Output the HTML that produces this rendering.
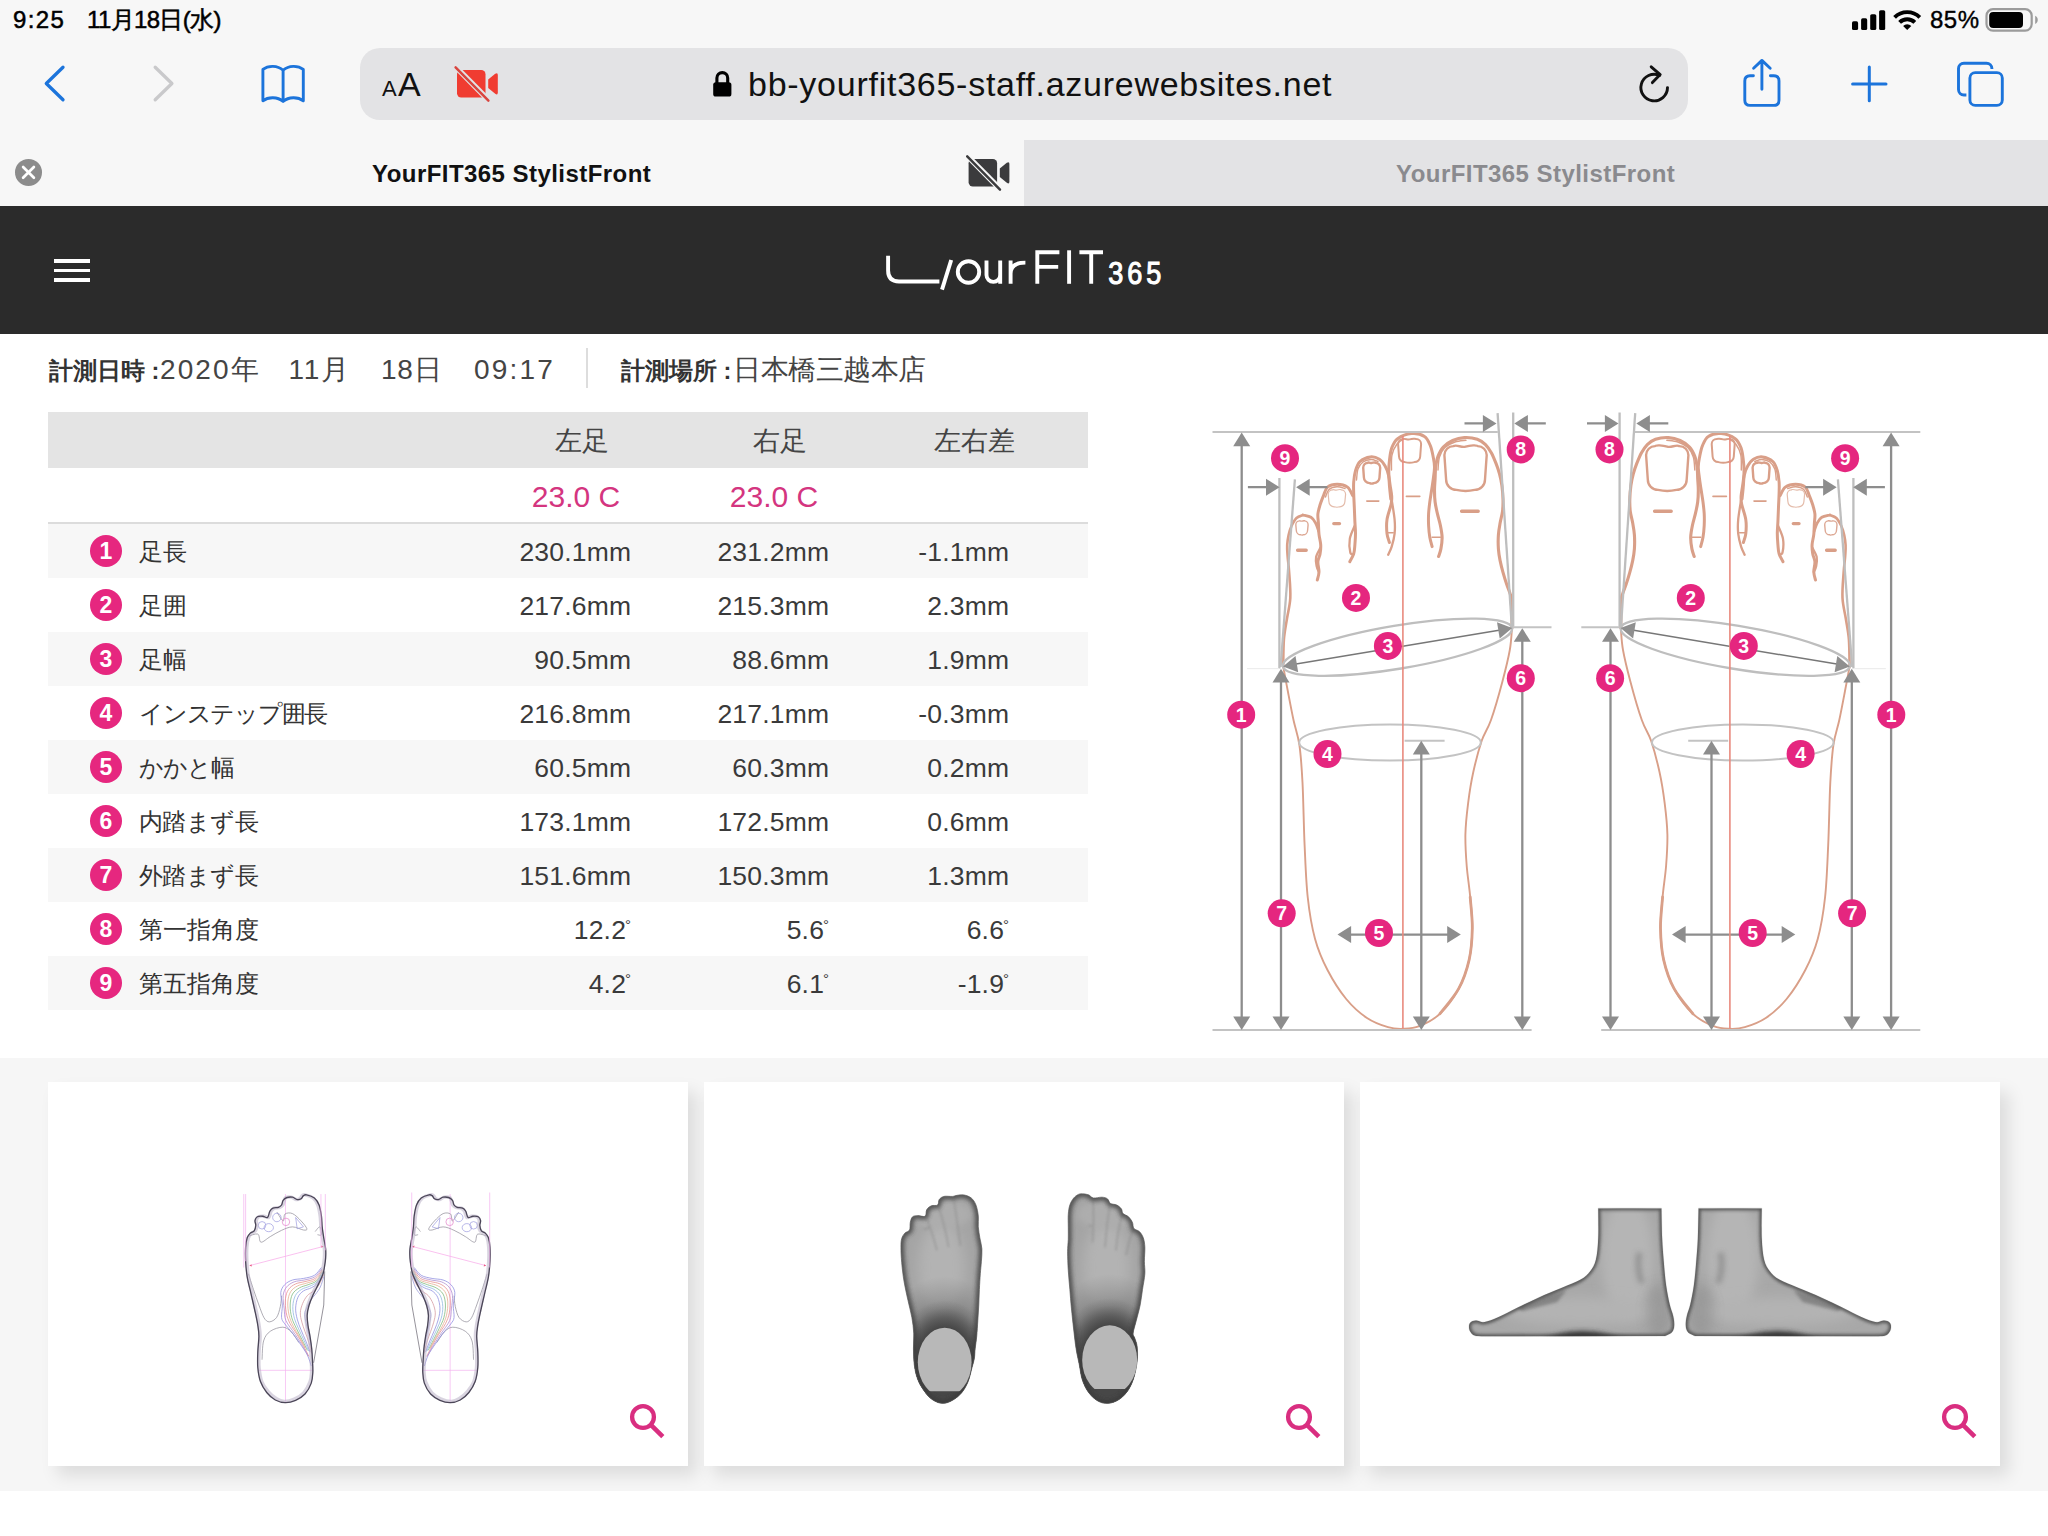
<!DOCTYPE html>
<html lang="ja">
<head>
<meta charset="utf-8">
<title>YourFIT365 StylistFront</title>
<style>
*{margin:0;padding:0;box-sizing:border-box}
html,body{width:2048px;height:1536px;overflow:hidden;background:#fff}
body{font-family:"Liberation Sans",sans-serif;color:#333;position:relative}
.abs{position:absolute}
svg{position:absolute;overflow:visible}
/* ---------- Safari chrome ---------- */
#chrome{position:absolute;left:0;top:0;width:2048px;height:206px;background:#f7f7f7}
#status-time{position:absolute;left:13px;top:6px;font-size:24px;line-height:28px;color:#000;letter-spacing:1.4px;white-space:nowrap;-webkit-text-stroke:.5px #000}
#status-date{position:absolute;left:87px;top:6px;font-size:24px;line-height:28px;color:#000;white-space:nowrap;letter-spacing:-.65px;-webkit-text-stroke:.5px #000}
#status-batt{position:absolute;left:1930px;top:6px;font-size:24px;line-height:28px;color:#000;letter-spacing:.5px;white-space:nowrap;-webkit-text-stroke:.4px #000}
#urlbar{position:absolute;left:360px;top:48px;width:1328px;height:72px;border-radius:20px;background:#e3e3e5}
#aa-s{position:absolute;left:382px;top:74px;font-size:22px;line-height:30px;color:#111}
#aa-b{position:absolute;left:398px;top:62px;font-size:34px;line-height:44px;color:#111}
#url{position:absolute;left:748px;top:62px;font-size:34px;line-height:44px;color:#111;white-space:nowrap;letter-spacing:.74px}
#tab-inactive{position:absolute;left:1024px;top:140px;width:1024px;height:66px;background:#e3e3e5}
.tabtitle{position:absolute;top:159px;font-size:24px;line-height:30px;font-weight:bold;white-space:nowrap;letter-spacing:.45px}
#tab1{left:372px;color:#111}
#tab2{left:1396px;color:#8a8a8e}
/* ---------- App header ---------- */
#appbar{position:absolute;left:0;top:206px;width:2048px;height:128px;background:#2b2b2b}
.hb{position:absolute;left:54px;width:36px;height:3.5px;background:#fff}
/* ---------- Info line ---------- */
.lbl{position:absolute;top:356px;font-size:23.5px;line-height:30px;font-weight:bold;color:#333;white-space:nowrap}
.val{position:absolute;top:352px;font-size:28px;line-height:36px;color:#444;white-space:nowrap}
#vdiv{position:absolute;left:586px;top:348px;width:2px;height:40px;background:#ddd}
/* ---------- Table ---------- */
#thead{position:absolute;left:48px;top:412px;width:1040px;height:56px;background:#e4e4e4}
.th{position:absolute;top:424px;font-size:27px;line-height:34px;color:#444;white-space:nowrap;text-align:center;width:160px}
.size{position:absolute;top:479px;font-size:30px;line-height:36px;color:#d4357f;white-space:nowrap;text-align:center;width:160px}
#tline{position:absolute;left:48px;top:522px;width:1040px;height:2px;background:#dcdcdc}
.row{position:absolute;left:48px;width:1040px;height:54px}
.row.g{background:#f7f7f7}
.num{position:absolute;left:42px;top:11px;width:32px;height:32px;border-radius:50%;background:#e6277f;color:#fff;font-size:23px;line-height:32px;font-weight:bold;text-align:center}
.name{position:absolute;left:91px;top:12px;font-size:23.5px;line-height:32px;color:#333;white-space:nowrap}
.c{position:absolute;top:11px;font-size:26.5px;line-height:34px;color:#3a3a3a;white-space:nowrap;text-align:right;width:200px;letter-spacing:.2px}
.c1{left:383.3px}.c2{left:581.3px}.c3{left:761.3px}
.deg{font-size:15px;position:relative;top:-9px;margin-left:-1px}
/* ---------- Cards ---------- */
#lower{position:absolute;left:0;top:1058px;width:2048px;height:433px;background:#f6f6f6}
.card{position:absolute;top:1082px;width:640px;height:384px;background:#fff;box-shadow:9px 10px 16px rgba(0,0,0,.10)}
</style>
</head>
<body>

<!-- ===== Safari chrome ===== -->
<div id="chrome">
  <div id="status-time">9:25</div>
  <div id="status-date">11月18日(水)</div>
  <div id="status-batt">85%</div>
  <div id="urlbar"></div>
  <div id="aa-s">A</div><div id="aa-b">A</div>
  <div id="url">bb-yourfit365-staff.azurewebsites.net</div>
  <div id="tab-inactive"></div>
  <div class="tabtitle" id="tab1">YourFIT365 StylistFront</div>
  <div class="tabtitle" id="tab2">YourFIT365 StylistFront</div>
  <svg id="chrome-icons" width="2048" height="206" viewBox="0 0 2048 206" style="left:0;top:0" fill="none" stroke-linecap="round" stroke-linejoin="round">
  <!-- status: signal -->
  <g fill="#000" stroke="none">
    <rect x="1852" y="21.3" width="6.1" height="8.7" rx="1.6"/>
    <rect x="1861.1" y="18.3" width="6.1" height="11.7" rx="1.6"/>
    <rect x="1870.2" y="14.2" width="6.1" height="15.8" rx="1.6"/>
    <rect x="1879.1" y="10.2" width="6.1" height="19.8" rx="1.6"/>
    <!-- wifi -->
    <path d="M1907.2 30 L1903.1 25.9 A5.8 5.8 0 0 1 1911.3 25.9 Z"/>
  </g>
  <g stroke="#000" stroke-width="3.9" stroke-linecap="butt">
    <path d="M1894.6 17.4 A17.8 17.8 0 0 1 1919.8 17.4"/>
    <path d="M1899.6 22.4 A10.7 10.7 0 0 1 1914.8 22.4"/>
  </g>
  <!-- battery -->
  <rect x="1986.5" y="9.2" width="45.2" height="21.4" rx="6.5" stroke="#9b9b9b" stroke-width="2.2"/>
  <rect x="1989.2" y="12" width="33.8" height="15.9" rx="4" fill="#000"/>
  <path d="M2035.2 15.7 C2038.6 17 2038.6 22.6 2035.2 23.9 Z" fill="#9b9b9b"/>
  <!-- back / forward -->
  <path d="M63 67.2 L46.3 83.5 L63 99.8" stroke="#1c74db" stroke-width="3.3"/>
  <path d="M155.2 67.2 L171.9 83.5 L155.2 99.8" stroke="#c9c9cb" stroke-width="3.3"/>
  <!-- bookmarks -->
  <path d="M283.1 70.2 C277.6 65.2 268.2 65.2 262.9 69.4 L262.9 100.8 C268.2 96.6 277.6 96.6 283.1 101.4 C288.6 96.6 298 96.6 303.3 100.8 L303.3 69.4 C298 65.2 288.6 65.2 283.1 70.2 Z M283.1 70.2 V101" stroke="#1c74db" stroke-width="2.9"/>
  <!-- red camera slash -->
  <g id="cam">
    <rect x="457" y="70" width="28.5" height="27.4" rx="4.2" fill="#f03c31"/>
    <path d="M488.2 79.6 L495.2 73.8 Q497.8 72 497.8 75 L497.8 92.6 Q497.8 95.6 495.2 93.8 L488.2 88 Z" fill="#f03c31"/>
    <path d="M455.2 66.4 L489.4 101" stroke="#e3e3e5" stroke-width="5.6" stroke-linecap="butt"/>
    <path d="M455.6 67.4 L488.4 100.6" stroke="#d9453f" stroke-width="2.5"/>
  </g>
  <!-- lock -->
  <rect x="713.2" y="82.2" width="18.2" height="14.4" rx="2.6" fill="#000"/>
  <path d="M716.9 84 V78 A5.4 5.4 0 0 1 727.7 78 V84" stroke="#000" stroke-width="3.1"/>
  <!-- reload -->
  <path d="M1667.5 87.6 A13.3 13.3 0 1 1 1659.6 75.4" stroke="#111" stroke-width="2.9"/>
  <path d="M1651.2 66.8 L1660.2 74.6 L1652.4 82.6" stroke="#111" stroke-width="2.9"/>
  <!-- share -->
  <path d="M1753.4 75.8 H1750 Q1744.8 75.8 1744.8 81 V100.2 Q1744.8 105.4 1750 105.4 H1773.8 Q1779 105.4 1779 100.2 V81 Q1779 75.8 1773.8 75.8 H1770.4" stroke="#1c74db" stroke-width="2.9"/>
  <path d="M1761.9 61.2 V89.2 M1753.6 68.2 L1761.9 60.4 L1770.2 68.2" stroke="#1c74db" stroke-width="2.9"/>
  <!-- plus -->
  <path d="M1852.6 83.9 H1886 M1869.3 67 V100.8" stroke="#1c74db" stroke-width="3"/>
  <!-- tabs -->
  <rect x="1958.5" y="63.2" width="33.4" height="31.8" rx="5.4" stroke="#1c74db" stroke-width="2.9"/>
  <rect x="1969.9" y="72.6" width="32.4" height="32.8" rx="5.4" fill="#f7f7f7" stroke="#f7f7f7" stroke-width="7"/>
  <rect x="1969.9" y="72.6" width="32.4" height="32.8" rx="5.4" stroke="#1c74db" stroke-width="2.9"/>
  <!-- tab close -->
  <circle cx="28.5" cy="172.4" r="13.5" fill="#8c8c8c"/>
  <path d="M23.1 167 L33.9 177.8 M33.9 167 L23.1 177.8" stroke="#fff" stroke-width="2.7"/>
  <!-- tab camera (dark) -->
  <g transform="translate(511.6 89)">
    <rect x="457" y="70" width="28.5" height="27.4" rx="4.2" fill="#3b3b3d"/>
    <path d="M488.2 79.6 L495.2 73.8 Q497.8 72 497.8 75 L497.8 92.6 Q497.8 95.6 495.2 93.8 L488.2 88 Z" fill="#3b3b3d"/>
    <path d="M455.2 66.4 L489.4 101" stroke="#f7f7f7" stroke-width="5.6" stroke-linecap="butt"/>
    <path d="M455.6 67.4 L488.4 100.6" stroke="#3b3b3d" stroke-width="2.5"/>
  </g>
</svg>

</div>

<!-- ===== App header ===== -->
<div id="appbar"></div>
<div class="hb" style="top:259px"></div><div class="hb" style="top:268.5px"></div><div class="hb" style="top:278px"></div>
<svg id="logo" width="2048" height="128" viewBox="0 206 2048 128" style="left:0;top:206px" fill="none" stroke="#fff" stroke-width="3.9">
  <path d="M888.1 255.8 V270.6 Q888.1 281.5 899 281.5 H939.4"/>
  <path d="M951.2 260 L942 289.6"/>
  <circle cx="968.5" cy="272" r="10.7"/>
  <path d="M986.5 260.6 V275 A6.85 6.85 0 0 0 1000.2 275 V260.6 M1000.2 275 V283.8"/>
  <path d="M1010.6 260.6 V283.8 M1010.6 273.5 Q1010.6 262.6 1025.4 262.6"/>
  <path d="M1037.3 283.8 V252.2 H1059.4 M1037.3 266.9 H1058.2"/>
  <path d="M1069.1 250.3 V283.8"/>
  <path d="M1079.4 252.2 H1103 M1091.2 252.2 V283.8"/>
  <text x="1108.2" y="283.6" font-family="Liberation Sans, sans-serif" font-size="31.5" fill="#fff" stroke="#fff" stroke-width="1.1" letter-spacing="4.6" transform="translate(1108.2 0) scale(0.86 1) translate(-1108.2 0)">365</text>
</svg>


<!-- ===== Info line ===== -->
<div class="lbl" style="left:49px">計測日時 :</div>
<div class="val" style="left:160px;letter-spacing:2.1px">2020年</div>
<div class="val" style="left:288.5px;letter-spacing:1.7px">11月</div>
<div class="val" style="left:381px;letter-spacing:.7px">18日</div>
<div class="val" style="left:474px;letter-spacing:2.2px">09:17</div>
<div id="vdiv"></div>
<div class="lbl" style="left:621px">計測場所 :</div>
<div class="val" style="left:733px;letter-spacing:-.5px">日本橋三越本店</div>

<!-- ===== Table ===== -->
<div id="thead"></div>
<div class="th" style="left:502px">左足</div>
<div class="th" style="left:700px">右足</div>
<div class="th" style="left:894px">左右差</div>
<div class="size" style="left:496px">23.0 C</div>
<div class="size" style="left:694px">23.0 C</div>
<div id="tline"></div>

<div class="row g" style="top:524px"><div class="num">1</div><div class="name">足長</div><div class="c c1">230.1mm</div><div class="c c2">231.2mm</div><div class="c c3">-1.1mm</div></div>
<div class="row" style="top:578px"><div class="num">2</div><div class="name">足囲</div><div class="c c1">217.6mm</div><div class="c c2">215.3mm</div><div class="c c3">2.3mm</div></div>
<div class="row g" style="top:632px"><div class="num">3</div><div class="name">足幅</div><div class="c c1">90.5mm</div><div class="c c2">88.6mm</div><div class="c c3">1.9mm</div></div>
<div class="row" style="top:686px"><div class="num">4</div><div class="name" style="letter-spacing:-1.25px">インステップ囲長</div><div class="c c1">216.8mm</div><div class="c c2">217.1mm</div><div class="c c3">-0.3mm</div></div>
<div class="row g" style="top:740px"><div class="num">5</div><div class="name" style="letter-spacing:-1px">かかと幅</div><div class="c c1">60.5mm</div><div class="c c2">60.3mm</div><div class="c c3">0.2mm</div></div>
<div class="row" style="top:794px"><div class="num">6</div><div class="name" style="letter-spacing:-.55px">内踏まず長</div><div class="c c1">173.1mm</div><div class="c c2">172.5mm</div><div class="c c3">0.6mm</div></div>
<div class="row g" style="top:848px"><div class="num">7</div><div class="name" style="letter-spacing:-.55px">外踏まず長</div><div class="c c1">151.6mm</div><div class="c c2">150.3mm</div><div class="c c3">1.3mm</div></div>
<div class="row" style="top:902px"><div class="num">8</div><div class="name">第一指角度</div><div class="c c1">12.2<span class="deg">°</span></div><div class="c c2">5.6<span class="deg">°</span></div><div class="c c3">6.6<span class="deg">°</span></div></div>
<div class="row g" style="top:956px"><div class="num">9</div><div class="name">第五指角度</div><div class="c c1">4.2<span class="deg">°</span></div><div class="c c2">6.1<span class="deg">°</span></div><div class="c c3">-1.9<span class="deg">°</span></div></div>

<!-- ===== Foot diagram ===== -->
<!--DIAGRAM-->
<svg id="diagram" width="760" height="660" viewBox="1190 400 760 660" style="left:1190px;top:400px" fill="none">
<defs><g id="footL">
<g stroke="#d99f88" fill="none" stroke-linecap="round" stroke-linejoin="round">
<path d="M1303.0 515.0 C1301.9 515.5 1298.4 516.2 1296.5 518.0 C1294.6 519.8 1292.8 523.2 1291.5 526.0 C1290.2 528.8 1289.3 531.8 1288.6 535.0 C1287.9 538.2 1287.4 541.5 1287.2 545.0 C1287.0 548.5 1287.3 551.3 1287.6 556.0 C1287.9 560.7 1288.8 566.0 1289.2 573.0 C1289.7 580.0 1290.7 590.4 1290.3 598.0 C1289.9 605.6 1288.1 611.6 1287.0 618.5 C1285.9 625.4 1284.5 631.5 1283.9 639.5 C1283.3 647.5 1283.3 662.0 1283.2 666.5" stroke-width="2.6"/>
<path d="M1283.2 666.5 C1284.0 670.7 1286.2 682.6 1287.9 691.5 C1289.6 700.4 1291.6 711.1 1293.5 720.0 C1295.4 728.9 1297.9 734.6 1299.4 745.0 C1300.9 755.4 1301.6 765.8 1302.5 782.5 C1303.4 799.2 1303.7 825.9 1304.6 845.0 C1305.5 864.1 1306.0 881.4 1307.7 897.0 C1309.4 912.6 1311.7 926.5 1315.0 938.7 C1318.3 950.9 1322.3 960.0 1327.5 970.0 C1332.7 980.0 1339.6 991.0 1346.2 999.0 C1352.8 1007.0 1360.0 1013.3 1367.0 1018.0 C1374.0 1022.7 1382.0 1025.4 1388.0 1027.2 C1394.0 1029.0 1397.8 1029.0 1403.0 1028.8 C1408.2 1028.6 1413.0 1028.7 1419.2 1026.2 C1425.4 1023.7 1433.4 1020.0 1440.0 1013.7 C1446.6 1007.5 1453.8 997.7 1458.7 988.7 C1463.6 979.7 1466.9 969.7 1469.2 959.6 C1471.5 949.5 1472.1 938.7 1472.3 928.3 C1472.5 917.9 1471.1 907.4 1470.2 897.0 C1469.3 886.6 1467.5 876.2 1466.7 865.8 C1465.9 855.4 1465.2 845.0 1465.4 834.6 C1465.6 824.2 1466.8 813.7 1468.1 803.3 C1469.4 792.9 1471.0 782.4 1473.3 772.0 C1475.6 761.6 1478.8 749.5 1481.7 740.8 C1484.7 732.1 1487.5 729.9 1491.0 720.0 C1494.5 710.1 1499.4 692.9 1502.5 681.2 C1505.6 669.5 1508.2 658.9 1509.8 650.0 C1511.4 641.1 1511.6 631.7 1512.0 628.0" stroke-width="1.9"/>
<path d="M1512.0 628.0 C1511.9 623.3 1511.9 605.8 1511.6 600.0 C1511.3 594.2 1510.8 596.1 1510.0 593.4 C1509.2 590.7 1507.8 587.5 1506.6 584.0 C1505.4 580.5 1504.1 576.2 1503.0 572.3 C1501.9 568.4 1500.9 564.5 1500.1 560.6 C1499.3 556.7 1498.7 553.2 1498.4 548.9 C1498.1 544.6 1498.1 539.1 1498.4 534.8 C1498.7 530.5 1499.4 527.0 1500.1 523.1 C1500.8 519.2 1502.0 515.3 1502.5 511.4 C1503.0 507.5 1503.1 504.0 1503.0 499.7 C1502.9 495.4 1502.5 489.9 1501.9 485.6 C1501.3 481.3 1500.5 477.6 1499.5 473.9 C1498.5 470.2 1497.4 466.9 1496.0 463.4 C1494.6 459.9 1493.0 455.9 1491.3 452.8 C1489.5 449.7 1487.8 446.9 1485.5 444.6 C1483.2 442.4 1480.8 440.5 1477.3 439.3 C1473.8 438.1 1468.5 437.4 1464.4 437.6 C1460.3 437.8 1456.2 438.9 1452.7 440.5 C1449.2 442.1 1445.8 444.4 1443.3 447.0 C1440.8 449.6 1439.3 453.0 1438.0 456.3 C1436.7 459.6 1436.2 463.2 1435.7 466.9 C1435.2 470.6 1435.3 474.7 1435.1 478.6 C1434.9 482.5 1434.5 486.4 1434.5 490.3 C1434.5 494.2 1434.6 498.1 1435.1 502.0 C1435.6 505.9 1436.5 509.8 1437.4 513.7 C1438.3 517.6 1439.6 521.6 1440.4 525.5 C1441.2 529.4 1442.0 533.3 1442.1 537.2 C1442.2 541.1 1441.5 545.7 1440.9 548.9 C1440.3 552.1 1439.0 555.2 1438.6 556.5" stroke-width="3.1"/>
<path d="M1440.0 1013.7 C1443.1 1009.5 1453.8 997.7 1458.7 988.7 C1463.6 979.7 1466.9 969.7 1469.2 959.6 C1471.5 949.5 1472.1 938.7 1472.3 928.3 C1472.5 917.9 1470.5 902.2 1470.2 897.0" stroke-width="2.8"/>
<path d="M1432.1 546.6 C1431.7 545.0 1430.4 540.7 1429.8 537.2 C1429.2 533.7 1428.8 529.4 1428.6 525.5 C1428.4 521.6 1428.4 517.6 1428.6 513.7 C1428.8 509.8 1429.3 505.9 1429.8 502.0 C1430.3 498.1 1431.0 494.2 1431.6 490.3 C1432.2 486.4 1432.8 482.5 1433.3 478.6 C1433.8 474.7 1434.5 470.4 1434.5 466.9 C1434.5 463.4 1434.0 461.0 1433.3 457.5 C1432.6 454.0 1431.9 449.3 1430.4 445.8 C1428.9 442.3 1427.6 438.4 1424.5 436.4 C1421.4 434.3 1416.1 433.1 1411.6 433.5 C1407.1 433.9 1400.9 436.3 1397.6 438.7 C1394.3 441.1 1393.1 444.4 1391.7 448.1 C1390.3 451.8 1389.9 456.9 1389.4 461.0 C1388.9 465.1 1388.7 468.8 1388.8 472.7 C1388.9 476.6 1389.5 480.6 1390.0 484.5 C1390.5 488.4 1391.5 492.9 1391.7 496.2 C1391.9 499.5 1391.9 500.5 1391.1 504.4 C1390.3 508.3 1387.7 514.7 1387.0 519.6 C1386.3 524.5 1386.6 529.9 1387.0 533.7 C1387.4 537.5 1389.0 541.0 1389.4 542.5" stroke-width="3.0"/>
<path d="M1391.7 500.0 C1392.2 503.3 1394.1 514.0 1394.6 519.6 C1395.1 525.2 1395.1 529.2 1394.6 533.7 C1394.1 538.2 1392.8 543.1 1391.7 546.6 C1390.6 550.1 1388.8 553.4 1388.2 554.8" stroke-width="2.3"/>
<path d="M1432.1 537.2 H1440.4 M1387.5 532.8 H1393.2" stroke-width="1.5"/>
<path d="M1390.8 499.1 C1390.6 497.2 1390.0 491.7 1389.6 487.7 C1389.2 483.7 1389.2 478.7 1388.5 475.1 C1387.8 471.5 1386.6 468.6 1385.1 466.0 C1383.6 463.4 1381.9 460.7 1379.4 459.2 C1376.9 457.7 1373.5 456.5 1370.3 456.9 C1367.1 457.3 1362.5 459.2 1360.0 461.5 C1357.5 463.8 1356.5 467.2 1355.5 470.6 C1354.5 474.0 1354.0 478.2 1353.7 482.0 C1353.4 485.8 1353.6 489.2 1353.7 493.4 C1353.8 497.6 1354.1 502.2 1354.3 507.0 C1354.5 511.8 1354.7 517.5 1354.9 521.9 C1355.1 526.3 1355.5 529.4 1355.5 533.2 C1355.5 537.0 1355.2 541.2 1354.9 544.6 C1354.6 548.0 1354.6 550.9 1353.7 553.7 C1352.8 556.6 1350.5 560.4 1349.8 561.7" stroke-width="3.0"/>
<path d="M1354.6 526.0 C1353.8 528.1 1350.5 534.5 1349.8 538.9 C1349.1 543.3 1349.7 550.0 1350.3 552.6 C1350.9 555.2 1352.8 554.2 1353.3 554.5" stroke-width="2.3"/>
<path d="M1352.6 495.6 C1351.8 494.2 1350.1 489.0 1347.5 487.1 C1344.9 485.2 1340.5 484.2 1337.2 484.2 C1333.9 484.2 1329.8 485.2 1327.5 487.1 C1325.2 489.0 1324.7 492.7 1323.5 495.6 C1322.3 498.6 1321.0 501.8 1320.1 504.8 C1319.2 507.9 1318.2 510.9 1317.9 513.9 C1317.6 516.9 1318.2 519.6 1318.4 523.0 C1318.6 526.4 1318.6 530.8 1319.0 534.4 C1319.4 538.0 1320.5 541.4 1320.7 544.6 C1320.9 547.8 1320.6 550.9 1320.1 553.7 C1319.6 556.6 1318.1 558.7 1317.9 561.7 C1317.7 564.8 1319.1 569.0 1319.0 572.0 C1318.9 575.0 1317.6 578.7 1317.3 580.0" stroke-width="3.0"/>
<path d="M1320.3 548.0 C1319.6 549.5 1316.7 554.0 1316.1 557.0 C1315.5 560.0 1316.1 563.5 1316.6 566.0 C1317.1 568.5 1318.5 571.0 1318.9 572.0" stroke-width="2.3"/>
<path d="M1303.0 515.0 C1304.3 515.4 1308.9 516.0 1311.0 517.3 C1313.1 518.6 1314.3 520.7 1315.6 523.0 C1316.9 525.3 1318.1 529.7 1318.6 531.0" stroke-width="2.8"/>
<path d="M1438.0 470.0 C1438.2 467.8 1438.3 460.8 1439.5 457.0 C1440.7 453.2 1442.4 450.0 1445.0 447.5 C1447.6 445.0 1451.5 443.2 1455.0 442.0 C1458.5 440.8 1464.2 440.6 1466.0 440.3" stroke-width="1.4"/>
<path d="M1391.5 470.0 C1391.6 467.5 1391.1 459.3 1392.0 455.0 C1392.9 450.7 1395.0 446.7 1397.0 444.0 C1399.0 441.3 1402.8 439.8 1404.0 439.0" stroke-width="1.4"/>
<path d="M1356.5 480.0 C1356.8 478.2 1356.9 472.0 1358.0 469.0 C1359.1 466.0 1360.8 463.6 1363.0 462.0 C1365.2 460.4 1368.5 459.6 1371.0 459.5 C1373.5 459.4 1376.8 461.2 1378.0 461.5" stroke-width="1.4"/>
<path d="M1325.5 497.0 C1326.1 495.8 1327.1 491.2 1329.0 489.5 C1330.9 487.8 1334.3 487.0 1337.0 486.8 C1339.7 486.6 1343.7 488.2 1345.0 488.5" stroke-width="1.4"/>
<path d="M1444.4 455.1 A9.0 9.0 0 0 1 1453.4 446.1 C1457.1 444.3 1461.3 447.9 1465.6 446.6 S1477.4 444.8 1477.7 446.1 A9.0 9.0 0 0 1 1486.7 455.1 L1485.0 479.5 A10.3 10.3 0 0 1 1474.7 489.9 Q1465.6 492.1 1456.4 489.9 A10.3 10.3 0 0 1 1446.1 479.5 Z" stroke-width="2.4" opacity="1.00"/>
<path d="M1398.1 444.1 A5.0 5.0 0 0 1 1403.1 439.1 C1405.0 438.2 1407.3 440.0 1409.6 439.4 S1416.0 438.4 1416.1 439.1 A5.0 5.0 0 0 1 1421.1 444.1 L1420.2 456.4 A5.8 5.8 0 0 1 1414.4 462.1 Q1409.6 463.2 1404.8 462.1 A5.8 5.8 0 0 1 1399.0 456.4 Z" stroke-width="2.0" opacity="1.00"/>
<path d="M1363.2 467.7 A5.0 5.0 0 0 1 1368.2 462.7 C1368.3 461.9 1370.0 463.5 1371.7 462.9 S1376.5 462.1 1375.2 462.7 A5.0 5.0 0 0 1 1380.2 467.7 L1379.5 477.4 A5.8 5.8 0 0 1 1373.8 483.1 Q1371.7 484.1 1369.6 483.1 A5.8 5.8 0 0 1 1363.9 477.4 Z" stroke-width="2.4" opacity="1.00"/>
<path d="M1328.2 494.3 A4.5 4.5 0 0 1 1332.7 489.8 C1333.4 489.1 1335.2 490.5 1336.9 490.0 S1341.8 489.3 1341.1 489.8 A4.5 4.5 0 0 1 1345.6 494.3 L1344.9 501.6 A5.2 5.2 0 0 1 1339.7 506.8 Q1336.9 507.7 1334.1 506.8 A5.2 5.2 0 0 1 1328.9 501.6 Z" stroke-width="1.2" opacity="0.70"/>
<path d="M1295.8 524.9 A4.0 4.0 0 0 1 1299.8 520.9 C1299.5 520.3 1300.7 521.5 1301.9 521.1 S1305.4 520.5 1304.1 520.9 A4.0 4.0 0 0 1 1308.1 524.9 L1307.6 530.2 A4.6 4.6 0 0 1 1303.0 534.8 Q1301.9 535.5 1300.9 534.8 A4.6 4.6 0 0 1 1296.3 530.2 Z" stroke-width="1.4" opacity="0.90"/>
<path d="M1461.6 511.2 H1478.2 M1333.8 523.6 H1339.5 M1297.6 550.3 H1306.2" stroke-width="3.4" stroke-linecap="round"/>
<path d="M1406.4 496.4 H1419.8 M1366.8 501.1 H1378.8" stroke-width="1.6"/>
</g>
<g stroke="#c3c3c3" stroke-width="2" fill="none">
<path d="M1212.5 432 H1497.8"/>
<path d="M1212.5 1030 H1531.6"/>
<path d="M1512 627.2 H1551.5"/>
<path d="M1404.6 740.8 H1444.6"/>
<ellipse cx="1390" cy="742.5" rx="90.8" ry="18"/>
</g>
<g stroke="#bebebe" stroke-width="2.3" fill="none">
<path d="M1279.4 478 V668.5"/>
<path d="M1294.9 479.4 L1280.6 667"/>
<path d="M1513.2 412.5 V626.5"/>
<path d="M1497.6 413.2 L1511.8 626.5"/>
<ellipse cx="1397.5" cy="647.2" rx="116.2" ry="21.6" transform="rotate(-9.47 1397.5 647.2)"/>
</g>
<path d="M1247 668.6 H1279" stroke="#ededed" stroke-width="1.2"/>
<g stroke="#8d8d8d" stroke-width="2.3" fill="none">
<path d="M1241.7 440 V1020"/>
<path d="M1281 678 V1020"/>
<path d="M1522.3 638 V1020"/>
<path d="M1421.3 750 V1020"/>
<path d="M1347 934.6 H1451"/>
<path d="M1247.9 487.2 H1270 M1305 487.2 H1327.5"/>
<path d="M1464.5 423.4 H1486 M1524 423.4 H1545.8"/>
</g>
<path d="M1290 665.1 L1505 629.3" stroke="#777" stroke-width="1.5"/>
<path d="M1241.7 432.6 L1250.2 446.2 L1233.2 446.2 Z" fill="#8d8d8d" stroke="none"/>
<path d="M1241.7 1030.0 L1233.2 1016.4 L1250.2 1016.4 Z" fill="#8d8d8d" stroke="none"/>
<path d="M1281.0 668.8 L1289.5 682.4 L1272.5 682.4 Z" fill="#8d8d8d" stroke="none"/>
<path d="M1281.0 1030.0 L1272.5 1016.4 L1289.5 1016.4 Z" fill="#8d8d8d" stroke="none"/>
<path d="M1522.3 628.2 L1530.8 641.8 L1513.8 641.8 Z" fill="#8d8d8d" stroke="none"/>
<path d="M1522.3 1030.0 L1513.8 1016.4 L1530.8 1016.4 Z" fill="#8d8d8d" stroke="none"/>
<path d="M1421.3 740.8 L1429.8 754.4 L1412.8 754.4 Z" fill="#8d8d8d" stroke="none"/>
<path d="M1421.3 1030.0 L1412.8 1016.4 L1429.8 1016.4 Z" fill="#8d8d8d" stroke="none"/>
<path d="M1337.5 934.6 L1351.1 926.1 L1351.1 943.1 Z" fill="#8d8d8d" stroke="none"/>
<path d="M1460.8 934.6 L1447.2 943.1 L1447.2 926.1 Z" fill="#8d8d8d" stroke="none"/>
<path d="M1279.6 487.2 L1266.0 495.7 L1266.0 478.7 Z" fill="#8d8d8d" stroke="none"/>
<path d="M1296.1 487.2 L1309.7 478.7 L1309.7 495.7 Z" fill="#8d8d8d" stroke="none"/>
<path d="M1496.5 423.4 L1482.9 431.9 L1482.9 414.9 Z" fill="#8d8d8d" stroke="none"/>
<path d="M1514.3 423.4 L1527.9 414.9 L1527.9 431.9 Z" fill="#8d8d8d" stroke="none"/>
<path d="M1512.2 628.0 L1499.7 638.4 L1497.0 622.2 Z" fill="#8f8f8f" stroke="none"/>
<path d="M1283.0 666.4 L1295.5 656.0 L1298.2 672.2 Z" fill="#8f8f8f" stroke="none"/>
<path d="M1402.9 436 V1028.5" stroke="#e98a7e" stroke-width="1.6" fill="none"/>
</g></defs>
<use href="#footL"/>
<use href="#footL" transform="translate(3132.8 0) scale(-1 1)"/>
<g font-family="Liberation Sans, sans-serif" font-size="19.5" font-weight="bold" fill="#fff" text-anchor="middle">
<circle cx="1285.0" cy="458.2" r="14" fill="#e5267f"/><text x="1285.0" y="465.1">9</text>
<circle cx="1520.7" cy="449.4" r="14" fill="#e5267f"/><text x="1520.7" y="456.3">8</text>
<circle cx="1356.0" cy="597.9" r="14" fill="#e5267f"/><text x="1356.0" y="604.8">2</text>
<circle cx="1387.9" cy="645.9" r="14" fill="#e5267f"/><text x="1387.9" y="652.8">3</text>
<circle cx="1520.8" cy="678.2" r="14" fill="#e5267f"/><text x="1520.8" y="685.1">6</text>
<circle cx="1241.2" cy="714.7" r="14" fill="#e5267f"/><text x="1241.2" y="721.6">1</text>
<circle cx="1327.5" cy="754.0" r="14" fill="#e5267f"/><text x="1327.5" y="760.9">4</text>
<circle cx="1281.7" cy="913.3" r="14" fill="#e5267f"/><text x="1281.7" y="920.2">7</text>
<circle cx="1379.0" cy="933.0" r="14" fill="#e5267f"/><text x="1379.0" y="939.9">5</text>
<circle cx="1609.5" cy="449.4" r="14" fill="#e5267f"/><text x="1609.5" y="456.3">8</text>
<circle cx="1845.1" cy="458.2" r="14" fill="#e5267f"/><text x="1845.1" y="465.1">9</text>
<circle cx="1690.8" cy="597.9" r="14" fill="#e5267f"/><text x="1690.8" y="604.8">2</text>
<circle cx="1743.8" cy="645.9" r="14" fill="#e5267f"/><text x="1743.8" y="652.8">3</text>
<circle cx="1610.1" cy="678.2" r="14" fill="#e5267f"/><text x="1610.1" y="685.1">6</text>
<circle cx="1891.3" cy="714.7" r="14" fill="#e5267f"/><text x="1891.3" y="721.6">1</text>
<circle cx="1800.6" cy="754.0" r="14" fill="#e5267f"/><text x="1800.6" y="760.9">4</text>
<circle cx="1852.1" cy="913.3" r="14" fill="#e5267f"/><text x="1852.1" y="920.2">7</text>
<circle cx="1752.7" cy="933.0" r="14" fill="#e5267f"/><text x="1752.7" y="939.9">5</text>
</g></svg>
<!--/DIAGRAM-->

<!-- ===== Lower cards ===== -->
<div id="lower"></div>
<div class="card" style="left:48px"></div>
<div class="card" style="left:704px"></div>
<div class="card" style="left:1360px"></div>
<!--CARDS-->
<svg id="cards" width="2048" height="420" viewBox="0 1070 2048 420" style="left:0;top:1070px" fill="none">
<defs>
<filter id="b6" filterUnits="userSpaceOnUse" x="-300" y="-300" width="2800" height="2200"><feGaussianBlur stdDeviation="6"/></filter>
<filter id="b12" filterUnits="userSpaceOnUse" x="-300" y="-300" width="2800" height="2200"><feGaussianBlur stdDeviation="12"/></filter>
<filter id="b22" filterUnits="userSpaceOnUse" x="-300" y="-300" width="2800" height="2200"><feGaussianBlur stdDeviation="22"/></filter>
<linearGradient id="ankg" x1="0" y1="0" x2="0" y2="1"><stop offset="0" stop-color="#4a4a4a" stop-opacity="0"/><stop offset=".1" stop-color="#4a4a4a" stop-opacity="0"/><stop offset=".25" stop-color="#4a4a4a" stop-opacity=".5"/><stop offset=".37" stop-color="#484848" stop-opacity=".95"/><stop offset="1" stop-color="#464646"/></linearGradient>
<radialGradient id="ankr2"><stop offset="0" stop-color="#505050" stop-opacity=".7"/><stop offset=".45" stop-color="#505050" stop-opacity=".6"/><stop offset=".75" stop-color="#585858" stop-opacity=".25"/><stop offset="1" stop-color="#606060" stop-opacity="0"/></radialGradient>
<radialGradient id="ankr"><stop offset="0" stop-color="#474747"/><stop offset=".56" stop-color="#474747"/><stop offset=".72" stop-color="#4c4c4c" stop-opacity=".6"/><stop offset=".88" stop-color="#555" stop-opacity=".18"/><stop offset="1" stop-color="#555" stop-opacity="0"/></radialGradient>
<filter id="b40" filterUnits="userSpaceOnUse" x="-300" y="-300" width="2800" height="2200"><feGaussianBlur stdDeviation="40"/></filter>
</defs>
<g id="printL" transform="translate(230 1180) scale(0.15625)">
<g stroke="#f4b4ef" stroke-width="4.6">
<path d="M355 90 V1425 M180 1218 H528"/>
<path d="M125 548 L598 425" stroke="#f8b0ea" stroke-width="5"/>
</g>
<path d="M598 425 l-15 -6 l3 15z M125 548 l15 6 l-3 -15z" fill="#ea5a82"/>
<path d="M606 585 L600 800 L535 1170" stroke="#77737d" stroke-width="5"/>
<g stroke="#8d8a96" stroke-width="4.5">
<path d="M112.0 362.0 C123.0 359.3 163.7 340.0 178.0 346.0 C192.3 352.0 184.7 395.3 198.0 398.0 C211.3 400.7 236.0 374.7 258.0 362.0 C280.0 349.3 306.3 332.3 330.0 322.0 C353.7 311.7 376.7 300.3 400.0 300.0 C423.3 299.7 454.7 318.0 470.0 320.0 C485.3 322.0 494.5 321.7 492.0 312.0 C489.5 302.3 470.3 278.2 455.0 262.0 C439.7 245.8 417.2 222.3 400.0 215.0 C382.8 207.7 362.0 210.2 352.0 218.0 C342.0 225.8 348.7 264.2 340.0 262.0 C331.3 259.8 306.7 214.5 300.0 205.0"/>
<path d="M118.0 600.0 C123.3 616.7 138.8 666.7 150.0 700.0 C161.2 733.3 173.7 769.7 185.0 800.0 C196.3 830.3 206.8 864.0 218.0 882.0 C229.2 900.0 238.7 908.3 252.0 908.0 C265.3 907.7 286.3 896.3 298.0 880.0 C309.7 863.7 316.7 833.3 322.0 810.0 C327.3 786.7 328.7 751.7 330.0 740.0"/>
<path d="M205.0 1150.0 C206.7 1130.0 206.2 1060.3 215.0 1030.0 C223.8 999.7 237.5 982.7 258.0 968.0 C278.5 953.3 315.7 941.3 338.0 942.0 C360.3 942.7 375.0 955.7 392.0 972.0 C409.0 988.3 432.0 1028.7 440.0 1040.0"/>
<path d="M545.0 330.0 C550.0 325.0 568.3 296.7 575.0 300.0 C581.7 303.3 587.5 341.7 585.0 350.0 C582.5 358.3 564.2 350.0 560.0 350.0"/>
</g>
<g stroke="#9c9be0" stroke-width="4.5"><circle cx="205" cy="290" r="24"/><circle cx="300" cy="240" r="27"/><ellipse cx="248" cy="305" rx="30" ry="26"/><path d="M420 240 L470 300 L430 312 Z"/></g>
<circle cx="358" cy="268" r="24" stroke="#e58fd0" stroke-width="5"/>
<path d="M585.0 560.0 C577.5 568.3 559.2 598.3 540.0 610.0 C520.8 621.7 493.3 625.0 470.0 630.0 C446.7 635.0 420.0 633.3 400.0 640.0 C380.0 646.7 362.5 656.7 350.0 670.0 C337.5 683.3 327.5 698.3 325.0 720.0 C322.5 741.7 334.2 773.3 335.0 800.0 C335.8 826.7 327.5 860.0 330.0 880.0 C332.5 900.0 338.3 903.3 350.0 920.0 C361.7 936.7 383.3 958.3 400.0 980.0 C416.7 1001.7 434.2 1026.7 450.0 1050.0 C465.8 1073.3 483.3 1096.7 495.0 1120.0 C506.7 1143.3 515.8 1178.3 520.0 1190.0" stroke="#8f8fe0" stroke-width="5"/>
<path d="M590.0 575.0 C582.5 584.2 563.3 617.5 545.0 630.0 C526.7 642.5 500.8 644.2 480.0 650.0 C459.2 655.8 437.5 656.7 420.0 665.0 C402.5 673.3 385.8 684.2 375.0 700.0 C364.2 715.8 357.5 735.0 355.0 760.0 C352.5 785.0 355.0 823.3 360.0 850.0 C365.0 876.7 373.3 896.7 385.0 920.0 C396.7 943.3 415.8 966.7 430.0 990.0 C444.2 1013.3 457.5 1036.7 470.0 1060.0 C482.5 1083.3 499.2 1118.3 505.0 1130.0" stroke="#e58f8f" stroke-width="5"/>
<path d="M595.0 585.0 C588.3 595.0 570.8 630.8 555.0 645.0 C539.2 659.2 518.3 662.5 500.0 670.0 C481.7 677.5 461.7 680.0 445.0 690.0 C428.3 700.0 410.0 711.7 400.0 730.0 C390.0 748.3 385.8 775.0 385.0 800.0 C384.2 825.0 388.3 855.0 395.0 880.0 C401.7 905.0 414.2 926.7 425.0 950.0 C435.8 973.3 448.3 996.7 460.0 1020.0 C471.7 1043.3 489.2 1078.3 495.0 1090.0" stroke="#7db87d" stroke-width="5"/>
<path d="M598.0 595.0 C591.7 605.8 573.0 644.2 560.0 660.0 C547.0 675.8 535.0 681.7 520.0 690.0 C505.0 698.3 484.2 700.0 470.0 710.0 C455.8 720.0 443.3 731.7 435.0 750.0 C426.7 768.3 420.8 796.7 420.0 820.0 C419.2 843.3 424.2 866.7 430.0 890.0 C435.8 913.3 445.8 936.7 455.0 960.0 C464.2 983.3 475.5 1006.7 485.0 1030.0 C494.5 1053.3 507.5 1088.3 512.0 1100.0" stroke="#8f8fe0" stroke-width="5"/>
<path d="M600.0 605.0 C595.0 615.8 580.8 652.5 570.0 670.0 C559.2 687.5 547.5 698.3 535.0 710.0 C522.5 721.7 506.7 726.7 495.0 740.0 C483.3 753.3 472.5 771.7 465.0 790.0 C457.5 808.3 450.8 830.0 450.0 850.0 C449.2 870.0 455.0 890.0 460.0 910.0 C465.0 930.0 472.5 948.3 480.0 970.0 C487.5 991.7 498.0 1016.7 505.0 1040.0 C512.0 1063.3 519.2 1098.3 522.0 1110.0" stroke="#d59aa0" stroke-width="5"/>
<path d="M602.0 615.0 C598.0 626.7 587.0 665.8 578.0 685.0 C569.0 704.2 558.5 715.8 548.0 730.0 C537.5 744.2 524.7 755.0 515.0 770.0 C505.3 785.0 496.2 805.0 490.0 820.0 C483.8 835.0 478.3 843.3 478.0 860.0 C477.7 876.7 483.5 898.3 488.0 920.0 C492.5 941.7 499.7 966.7 505.0 990.0 C510.3 1013.3 517.5 1048.3 520.0 1060.0" stroke="#9a9ad8" stroke-width="5"/>
<path d="M587.0 568.0 C579.5 576.7 560.7 608.0 542.0 620.0 C523.3 632.0 497.0 634.7 475.0 640.0 C453.0 645.3 428.8 644.5 410.0 652.0 C391.2 659.5 373.7 670.3 362.0 685.0 C350.3 699.7 342.5 716.7 340.0 740.0 C337.5 763.3 344.0 798.3 347.0 825.0 C350.0 851.7 346.7 873.3 358.0 900.0 C369.3 926.7 398.0 959.2 415.0 985.0 C432.0 1010.8 445.8 1031.7 460.0 1055.0 C474.2 1078.3 493.3 1113.3 500.0 1125.0" stroke="#b08fd0" stroke-width="5"/>
<path d="M593.0 580.0 C585.8 589.7 567.2 624.7 550.0 638.0 C532.8 651.3 509.7 653.3 490.0 660.0 C470.3 666.7 449.0 668.8 432.0 678.0 C415.0 687.2 398.3 698.0 388.0 715.0 C377.7 732.0 371.7 755.0 370.0 780.0 C368.3 805.0 372.2 839.2 378.0 865.0 C383.8 890.8 393.8 911.7 405.0 935.0 C416.2 958.3 432.0 981.7 445.0 1005.0 C458.0 1028.3 476.7 1063.3 483.0 1075.0" stroke="#e5b08f" stroke-width="5"/>
<path d="M597.0 590.0 C590.5 600.3 572.5 637.0 558.0 652.0 C543.5 667.0 526.7 672.0 510.0 680.0 C493.3 688.0 473.3 690.0 458.0 700.0 C442.7 710.0 427.3 721.7 418.0 740.0 C408.7 758.3 403.0 785.8 402.0 810.0 C401.0 834.2 405.7 860.8 412.0 885.0 C418.3 909.2 429.8 931.7 440.0 955.0 C450.2 978.3 462.3 1001.7 473.0 1025.0 C483.7 1048.3 498.8 1083.3 504.0 1095.0" stroke="#8fb8e0" stroke-width="5"/>
<path d="M482.0 95.0 C493.7 97.5 518.7 104.2 532.0 115.0 C545.3 125.8 554.5 140.8 562.0 160.0 C569.5 179.2 573.7 206.7 577.0 230.0 C580.3 253.3 579.5 276.7 582.0 300.0 C584.5 323.3 588.3 346.7 592.0 370.0 C595.7 393.3 602.0 418.3 604.0 440.0 C606.0 461.7 605.3 480.0 604.0 500.0 C602.7 520.0 599.0 542.5 596.0 560.0 C593.0 577.5 592.2 587.5 586.0 605.0 C579.8 622.5 569.3 643.3 559.0 665.0 C548.7 686.7 534.3 711.7 524.0 735.0 C513.7 758.3 503.3 783.3 497.0 805.0 C490.7 826.7 487.0 844.2 486.0 865.0 C485.0 885.8 488.0 907.5 491.0 930.0 C494.0 952.5 500.0 975.0 504.0 1000.0 C508.0 1025.0 512.3 1053.3 515.0 1080.0 C517.7 1106.7 518.8 1135.0 520.0 1160.0 C521.2 1185.0 523.3 1208.0 522.0 1230.0 C520.7 1252.0 520.3 1270.0 512.0 1292.0 C503.7 1314.0 488.7 1343.7 472.0 1362.0 C455.3 1380.3 432.8 1392.8 412.0 1402.0 C391.2 1411.2 366.0 1417.3 347.0 1417.0 C328.0 1416.7 315.3 1410.8 298.0 1400.0 C280.7 1389.2 258.8 1370.3 243.0 1352.0 C227.2 1333.7 212.5 1315.3 203.0 1290.0 C193.5 1264.7 188.8 1231.7 186.0 1200.0 C183.2 1168.3 184.8 1133.3 186.0 1100.0 C187.2 1066.7 193.0 1028.3 193.0 1000.0 C193.0 971.7 190.2 956.7 186.0 930.0 C181.8 903.3 175.2 873.3 168.0 840.0 C160.8 806.7 151.3 766.7 143.0 730.0 C134.7 693.3 123.8 655.0 118.0 620.0 C112.2 585.0 109.7 551.7 108.0 520.0 C106.3 488.3 106.3 455.0 108.0 430.0 C109.7 405.0 113.0 385.0 118.0 370.0 C123.0 355.0 130.5 347.5 138.0 340.0 C145.5 332.5 157.2 333.3 163.0 325.0 C168.8 316.7 172.2 300.8 173.0 290.0 C173.8 279.2 166.3 269.2 168.0 260.0 C169.7 250.8 174.7 239.7 183.0 235.0 C191.3 230.3 207.2 231.2 218.0 232.0 C228.8 232.8 240.5 245.3 248.0 240.0 C255.5 234.7 257.2 210.0 263.0 200.0 C268.8 190.0 273.8 184.2 283.0 180.0 C292.2 175.8 308.8 178.3 318.0 175.0 C327.2 171.7 333.0 167.5 338.0 160.0 C343.0 152.5 344.8 138.0 348.0 130.0 C351.2 122.0 349.7 115.3 357.0 112.0 C364.3 108.7 381.2 107.8 392.0 110.0 C402.8 112.2 412.8 123.3 422.0 125.0 C431.2 126.7 440.3 124.2 447.0 120.0 C453.7 115.8 456.2 104.2 462.0 100.0 C467.8 95.8 470.3 92.5 482.0 95.0Z" stroke="#b9b0c6" stroke-width="22" opacity=".55"/>
<path d="M490.0 95.0 C501.7 97.5 526.7 104.2 540.0 115.0 C553.3 125.8 562.5 140.8 570.0 160.0 C577.5 179.2 581.7 206.7 585.0 230.0 C588.3 253.3 587.5 276.7 590.0 300.0 C592.5 323.3 596.3 346.7 600.0 370.0 C603.7 393.3 610.0 418.3 612.0 440.0 C614.0 461.7 613.3 480.0 612.0 500.0 C610.7 520.0 607.0 542.5 604.0 560.0 C601.0 577.5 600.2 587.5 594.0 605.0 C587.8 622.5 577.3 643.3 567.0 665.0 C556.7 686.7 542.3 711.7 532.0 735.0 C521.7 758.3 511.3 783.3 505.0 805.0 C498.7 826.7 495.0 844.2 494.0 865.0 C493.0 885.8 496.0 907.5 499.0 930.0 C502.0 952.5 508.0 975.0 512.0 1000.0 C516.0 1025.0 520.3 1053.3 523.0 1080.0 C525.7 1106.7 526.8 1135.0 528.0 1160.0 C529.2 1185.0 531.3 1206.7 530.0 1230.0 C528.7 1253.3 528.3 1276.7 520.0 1300.0 C511.7 1323.3 496.7 1351.7 480.0 1370.0 C463.3 1388.3 440.8 1400.8 420.0 1410.0 C399.2 1419.2 376.7 1425.3 355.0 1425.0 C333.3 1424.7 310.0 1418.8 290.0 1408.0 C270.0 1397.2 250.8 1379.7 235.0 1360.0 C219.2 1340.3 204.5 1316.7 195.0 1290.0 C185.5 1263.3 180.8 1231.7 178.0 1200.0 C175.2 1168.3 176.8 1133.3 178.0 1100.0 C179.2 1066.7 185.0 1028.3 185.0 1000.0 C185.0 971.7 182.2 956.7 178.0 930.0 C173.8 903.3 167.2 873.3 160.0 840.0 C152.8 806.7 143.3 766.7 135.0 730.0 C126.7 693.3 115.8 655.0 110.0 620.0 C104.2 585.0 101.7 551.7 100.0 520.0 C98.3 488.3 98.3 455.0 100.0 430.0 C101.7 405.0 105.0 385.0 110.0 370.0 C115.0 355.0 122.5 347.5 130.0 340.0 C137.5 332.5 149.2 333.3 155.0 325.0 C160.8 316.7 164.2 300.8 165.0 290.0 C165.8 279.2 158.3 269.2 160.0 260.0 C161.7 250.8 166.7 239.7 175.0 235.0 C183.3 230.3 199.2 231.2 210.0 232.0 C220.8 232.8 232.5 245.3 240.0 240.0 C247.5 234.7 249.2 210.0 255.0 200.0 C260.8 190.0 265.8 184.2 275.0 180.0 C284.2 175.8 300.8 178.3 310.0 175.0 C319.2 171.7 325.0 167.5 330.0 160.0 C335.0 152.5 334.2 138.0 340.0 130.0 C345.8 122.0 355.0 115.3 365.0 112.0 C375.0 108.7 389.2 107.8 400.0 110.0 C410.8 112.2 420.8 123.3 430.0 125.0 C439.2 126.7 448.3 124.2 455.0 120.0 C461.7 115.8 464.2 104.2 470.0 100.0 C475.8 95.8 478.3 92.5 490.0 95.0Z" stroke="#4b4658" stroke-width="8.5" stroke-linejoin="round"/>
</g>
<use href="#printL" transform="translate(735.6 0) scale(-1 1)"/>
<g transform="translate(230 1180) scale(0.15625)" stroke="#f4b4ef" stroke-width="4.6"><path d="M88 90 V560 M100 90 V520 M582 90 V430 M610 90 V450"/></g>
<g transform="translate(230 1180) scale(0.15625)" stroke="#f4b4ef" stroke-width="4.6"><path d="M1163 80 V560 M1662 80 V560"/></g>
<g transform="translate(890 1180) scale(0.15625)">
<clipPath id="flc"><path d="M470.0 95.0 C485.0 97.8 506.7 104.2 520.0 115.0 C533.3 125.8 542.5 140.8 550.0 160.0 C557.5 179.2 562.5 206.7 565.0 230.0 C567.5 253.3 563.3 276.7 565.0 300.0 C566.7 323.3 571.2 346.7 575.0 370.0 C578.8 393.3 586.3 415.0 588.0 440.0 C589.7 465.0 586.7 493.3 585.0 520.0 C583.3 546.7 580.2 570.0 578.0 600.0 C575.8 630.0 573.7 666.7 572.0 700.0 C570.3 733.3 569.7 766.7 568.0 800.0 C566.3 833.3 564.2 866.7 562.0 900.0 C559.8 933.3 557.8 970.0 555.0 1000.0 C552.2 1030.0 547.5 1056.7 545.0 1080.0 C542.5 1103.3 543.3 1120.0 540.0 1140.0 C536.7 1160.0 531.7 1175.0 525.0 1200.0 C518.3 1225.0 510.8 1263.3 500.0 1290.0 C489.2 1316.7 476.7 1340.0 460.0 1360.0 C443.3 1380.0 420.8 1398.3 400.0 1410.0 C379.2 1421.7 356.7 1430.8 335.0 1430.0 C313.3 1429.2 290.0 1419.2 270.0 1405.0 C250.0 1390.8 230.8 1367.5 215.0 1345.0 C199.2 1322.5 185.0 1297.5 175.0 1270.0 C165.0 1242.5 159.2 1211.7 155.0 1180.0 C150.8 1148.3 150.5 1113.3 150.0 1080.0 C149.5 1046.7 153.7 1013.3 152.0 980.0 C150.3 946.7 146.2 915.0 140.0 880.0 C133.8 845.0 123.3 808.3 115.0 770.0 C106.7 731.7 96.7 690.0 90.0 650.0 C83.3 610.0 78.3 566.7 75.0 530.0 C71.7 493.3 70.0 455.8 70.0 430.0 C70.0 404.2 70.8 390.0 75.0 375.0 C79.2 360.0 86.7 349.2 95.0 340.0 C103.3 330.8 119.2 331.7 125.0 320.0 C130.8 308.3 126.7 284.2 130.0 270.0 C133.3 255.8 136.7 242.0 145.0 235.0 C153.3 228.0 166.7 228.5 180.0 228.0 C193.3 227.5 215.8 238.3 225.0 232.0 C234.2 225.7 228.3 201.2 235.0 190.0 C241.7 178.8 253.3 170.0 265.0 165.0 C276.7 160.0 296.7 166.7 305.0 160.0 C313.3 153.3 308.3 134.2 315.0 125.0 C321.7 115.8 330.8 108.3 345.0 105.0 C359.2 101.7 385.8 106.2 400.0 105.0 C414.2 103.8 418.3 99.7 430.0 98.0 C441.7 96.3 455.0 92.2 470.0 95.0Z"/></clipPath>
<clipPath id="fld"><rect x="0" y="0" width="800" height="1352"/></clipPath>
<g clip-path="url(#flc)">
<path d="M470.0 95.0 C485.0 97.8 506.7 104.2 520.0 115.0 C533.3 125.8 542.5 140.8 550.0 160.0 C557.5 179.2 562.5 206.7 565.0 230.0 C567.5 253.3 563.3 276.7 565.0 300.0 C566.7 323.3 571.2 346.7 575.0 370.0 C578.8 393.3 586.3 415.0 588.0 440.0 C589.7 465.0 586.7 493.3 585.0 520.0 C583.3 546.7 580.2 570.0 578.0 600.0 C575.8 630.0 573.7 666.7 572.0 700.0 C570.3 733.3 569.7 766.7 568.0 800.0 C566.3 833.3 564.2 866.7 562.0 900.0 C559.8 933.3 557.8 970.0 555.0 1000.0 C552.2 1030.0 547.5 1056.7 545.0 1080.0 C542.5 1103.3 543.3 1120.0 540.0 1140.0 C536.7 1160.0 531.7 1175.0 525.0 1200.0 C518.3 1225.0 510.8 1263.3 500.0 1290.0 C489.2 1316.7 476.7 1340.0 460.0 1360.0 C443.3 1380.0 420.8 1398.3 400.0 1410.0 C379.2 1421.7 356.7 1430.8 335.0 1430.0 C313.3 1429.2 290.0 1419.2 270.0 1405.0 C250.0 1390.8 230.8 1367.5 215.0 1345.0 C199.2 1322.5 185.0 1297.5 175.0 1270.0 C165.0 1242.5 159.2 1211.7 155.0 1180.0 C150.8 1148.3 150.5 1113.3 150.0 1080.0 C149.5 1046.7 153.7 1013.3 152.0 980.0 C150.3 946.7 146.2 915.0 140.0 880.0 C133.8 845.0 123.3 808.3 115.0 770.0 C106.7 731.7 96.7 690.0 90.0 650.0 C83.3 610.0 78.3 566.7 75.0 530.0 C71.7 493.3 70.0 455.8 70.0 430.0 C70.0 404.2 70.8 390.0 75.0 375.0 C79.2 360.0 86.7 349.2 95.0 340.0 C103.3 330.8 119.2 331.7 125.0 320.0 C130.8 308.3 126.7 284.2 130.0 270.0 C133.3 255.8 136.7 242.0 145.0 235.0 C153.3 228.0 166.7 228.5 180.0 228.0 C193.3 227.5 215.8 238.3 225.0 232.0 C234.2 225.7 228.3 201.2 235.0 190.0 C241.7 178.8 253.3 170.0 265.0 165.0 C276.7 160.0 296.7 166.7 305.0 160.0 C313.3 153.3 308.3 134.2 315.0 125.0 C321.7 115.8 330.8 108.3 345.0 105.0 C359.2 101.7 385.8 106.2 400.0 105.0 C414.2 103.8 418.3 99.7 430.0 98.0 C441.7 96.3 455.0 92.2 470.0 95.0Z" fill="#a4a4a4"/>
<ellipse cx="330" cy="560" rx="150" ry="300" fill="#b3b3b3" filter="url(#b40)"/>
<ellipse cx="330" cy="220" rx="190" ry="90" fill="#adadad" filter="url(#b22)"/>
<ellipse cx="350" cy="1167" rx="432" ry="552" fill="url(#ankr2)"/>
<ellipse cx="350" cy="1167" rx="322" ry="397" fill="url(#ankr)"/>
<rect x="0" y="1207" width="800" height="500" fill="#474747" filter="url(#b22)"/>
<path d="M232 240 Q270 330 300 450 M312 175 Q350 290 375 430 M408 120 Q430 260 450 420 M215 310 Q240 320 250 300" stroke="#8a8a8a" stroke-width="10" filter="url(#b6)" opacity=".55"/>
<path d="M470.0 95.0 C485.0 97.8 506.7 104.2 520.0 115.0 C533.3 125.8 542.5 140.8 550.0 160.0 C557.5 179.2 562.5 206.7 565.0 230.0 C567.5 253.3 563.3 276.7 565.0 300.0 C566.7 323.3 571.2 346.7 575.0 370.0 C578.8 393.3 586.3 415.0 588.0 440.0 C589.7 465.0 586.7 493.3 585.0 520.0 C583.3 546.7 580.2 570.0 578.0 600.0 C575.8 630.0 573.7 666.7 572.0 700.0 C570.3 733.3 569.7 766.7 568.0 800.0 C566.3 833.3 564.2 866.7 562.0 900.0 C559.8 933.3 557.8 970.0 555.0 1000.0 C552.2 1030.0 547.5 1056.7 545.0 1080.0 C542.5 1103.3 543.3 1120.0 540.0 1140.0 C536.7 1160.0 531.7 1175.0 525.0 1200.0 C518.3 1225.0 510.8 1263.3 500.0 1290.0 C489.2 1316.7 476.7 1340.0 460.0 1360.0 C443.3 1380.0 420.8 1398.3 400.0 1410.0 C379.2 1421.7 356.7 1430.8 335.0 1430.0 C313.3 1429.2 290.0 1419.2 270.0 1405.0 C250.0 1390.8 230.8 1367.5 215.0 1345.0 C199.2 1322.5 185.0 1297.5 175.0 1270.0 C165.0 1242.5 159.2 1211.7 155.0 1180.0 C150.8 1148.3 150.5 1113.3 150.0 1080.0 C149.5 1046.7 153.7 1013.3 152.0 980.0 C150.3 946.7 146.2 915.0 140.0 880.0 C133.8 845.0 123.3 808.3 115.0 770.0 C106.7 731.7 96.7 690.0 90.0 650.0 C83.3 610.0 78.3 566.7 75.0 530.0 C71.7 493.3 70.0 455.8 70.0 430.0 C70.0 404.2 70.8 390.0 75.0 375.0 C79.2 360.0 86.7 349.2 95.0 340.0 C103.3 330.8 119.2 331.7 125.0 320.0 C130.8 308.3 126.7 284.2 130.0 270.0 C133.3 255.8 136.7 242.0 145.0 235.0 C153.3 228.0 166.7 228.5 180.0 228.0 C193.3 227.5 215.8 238.3 225.0 232.0 C234.2 225.7 228.3 201.2 235.0 190.0 C241.7 178.8 253.3 170.0 265.0 165.0 C276.7 160.0 296.7 166.7 305.0 160.0 C313.3 153.3 308.3 134.2 315.0 125.0 C321.7 115.8 330.8 108.3 345.0 105.0 C359.2 101.7 385.8 106.2 400.0 105.0 C414.2 103.8 418.3 99.7 430.0 98.0 C441.7 96.3 455.0 92.2 470.0 95.0Z" stroke="#3a3a3a" stroke-width="40" filter="url(#b12)" opacity=".8"/>
</g>
<path d="M470.0 95.0 C485.0 97.8 506.7 104.2 520.0 115.0 C533.3 125.8 542.5 140.8 550.0 160.0 C557.5 179.2 562.5 206.7 565.0 230.0 C567.5 253.3 563.3 276.7 565.0 300.0 C566.7 323.3 571.2 346.7 575.0 370.0 C578.8 393.3 586.3 415.0 588.0 440.0 C589.7 465.0 586.7 493.3 585.0 520.0 C583.3 546.7 580.2 570.0 578.0 600.0 C575.8 630.0 573.7 666.7 572.0 700.0 C570.3 733.3 569.7 766.7 568.0 800.0 C566.3 833.3 564.2 866.7 562.0 900.0 C559.8 933.3 557.8 970.0 555.0 1000.0 C552.2 1030.0 547.5 1056.7 545.0 1080.0 C542.5 1103.3 543.3 1120.0 540.0 1140.0 C536.7 1160.0 531.7 1175.0 525.0 1200.0 C518.3 1225.0 510.8 1263.3 500.0 1290.0 C489.2 1316.7 476.7 1340.0 460.0 1360.0 C443.3 1380.0 420.8 1398.3 400.0 1410.0 C379.2 1421.7 356.7 1430.8 335.0 1430.0 C313.3 1429.2 290.0 1419.2 270.0 1405.0 C250.0 1390.8 230.8 1367.5 215.0 1345.0 C199.2 1322.5 185.0 1297.5 175.0 1270.0 C165.0 1242.5 159.2 1211.7 155.0 1180.0 C150.8 1148.3 150.5 1113.3 150.0 1080.0 C149.5 1046.7 153.7 1013.3 152.0 980.0 C150.3 946.7 146.2 915.0 140.0 880.0 C133.8 845.0 123.3 808.3 115.0 770.0 C106.7 731.7 96.7 690.0 90.0 650.0 C83.3 610.0 78.3 566.7 75.0 530.0 C71.7 493.3 70.0 455.8 70.0 430.0 C70.0 404.2 70.8 390.0 75.0 375.0 C79.2 360.0 86.7 349.2 95.0 340.0 C103.3 330.8 119.2 331.7 125.0 320.0 C130.8 308.3 126.7 284.2 130.0 270.0 C133.3 255.8 136.7 242.0 145.0 235.0 C153.3 228.0 166.7 228.5 180.0 228.0 C193.3 227.5 215.8 238.3 225.0 232.0 C234.2 225.7 228.3 201.2 235.0 190.0 C241.7 178.8 253.3 170.0 265.0 165.0 C276.7 160.0 296.7 166.7 305.0 160.0 C313.3 153.3 308.3 134.2 315.0 125.0 C321.7 115.8 330.8 108.3 345.0 105.0 C359.2 101.7 385.8 106.2 400.0 105.0 C414.2 103.8 418.3 99.7 430.0 98.0 C441.7 96.3 455.0 92.2 470.0 95.0Z" stroke="#5a5a5a" stroke-width="6" opacity=".75"/>
<g clip-path="url(#fld)"><ellipse cx="350" cy="1167" rx="172" ry="222" fill="#b8b8b8"/></g>
</g>
<g transform="translate(1055 1180) scale(0.15625)">
<clipPath id="frc"><path d="M175.0 88.0 C185.8 88.5 203.3 90.5 215.0 95.0 C226.7 99.5 230.8 112.5 245.0 115.0 C259.2 117.5 285.0 109.2 300.0 110.0 C315.0 110.8 325.8 113.3 335.0 120.0 C344.2 126.7 345.0 143.3 355.0 150.0 C365.0 156.7 383.3 154.2 395.0 160.0 C406.7 165.8 418.3 175.8 425.0 185.0 C431.7 194.2 427.5 206.7 435.0 215.0 C442.5 223.3 460.0 225.8 470.0 235.0 C480.0 244.2 489.2 257.5 495.0 270.0 C500.8 282.5 497.5 300.0 505.0 310.0 C512.5 320.0 530.0 320.0 540.0 330.0 C550.0 340.0 559.2 353.3 565.0 370.0 C570.8 386.7 573.8 405.0 575.0 430.0 C576.2 455.0 572.0 491.7 572.0 520.0 C572.0 548.3 577.0 570.0 575.0 600.0 C573.0 630.0 565.0 666.7 560.0 700.0 C555.0 733.3 551.7 766.7 545.0 800.0 C538.3 833.3 527.5 870.0 520.0 900.0 C512.5 930.0 501.7 961.7 500.0 980.0 C498.3 998.3 505.8 996.7 510.0 1010.0 C514.2 1023.3 522.0 1040.0 525.0 1060.0 C528.0 1080.0 528.8 1106.7 528.0 1130.0 C527.2 1153.3 524.7 1175.0 520.0 1200.0 C515.3 1225.0 509.2 1255.0 500.0 1280.0 C490.8 1305.0 480.0 1329.2 465.0 1350.0 C450.0 1370.8 430.8 1391.7 410.0 1405.0 C389.2 1418.3 362.5 1428.3 340.0 1430.0 C317.5 1431.7 295.8 1426.7 275.0 1415.0 C254.2 1403.3 231.7 1382.5 215.0 1360.0 C198.3 1337.5 185.0 1310.0 175.0 1280.0 C165.0 1250.0 161.7 1213.3 155.0 1180.0 C148.3 1146.7 140.8 1116.7 135.0 1080.0 C129.2 1043.3 125.0 1003.3 120.0 960.0 C115.0 916.7 109.2 863.3 105.0 820.0 C100.8 776.7 98.3 740.0 95.0 700.0 C91.7 660.0 87.5 620.0 85.0 580.0 C82.5 540.0 80.0 493.3 80.0 460.0 C80.0 426.7 84.2 406.7 85.0 380.0 C85.8 353.3 85.0 326.7 85.0 300.0 C85.0 273.3 83.3 243.3 85.0 220.0 C86.7 196.7 89.2 177.5 95.0 160.0 C100.8 142.5 110.8 126.3 120.0 115.0 C129.2 103.7 140.8 96.5 150.0 92.0 C159.2 87.5 164.2 87.5 175.0 88.0Z"/></clipPath>
<clipPath id="frd"><rect x="0" y="0" width="800" height="1337"/></clipPath>
<g clip-path="url(#frc)">
<path d="M175.0 88.0 C185.8 88.5 203.3 90.5 215.0 95.0 C226.7 99.5 230.8 112.5 245.0 115.0 C259.2 117.5 285.0 109.2 300.0 110.0 C315.0 110.8 325.8 113.3 335.0 120.0 C344.2 126.7 345.0 143.3 355.0 150.0 C365.0 156.7 383.3 154.2 395.0 160.0 C406.7 165.8 418.3 175.8 425.0 185.0 C431.7 194.2 427.5 206.7 435.0 215.0 C442.5 223.3 460.0 225.8 470.0 235.0 C480.0 244.2 489.2 257.5 495.0 270.0 C500.8 282.5 497.5 300.0 505.0 310.0 C512.5 320.0 530.0 320.0 540.0 330.0 C550.0 340.0 559.2 353.3 565.0 370.0 C570.8 386.7 573.8 405.0 575.0 430.0 C576.2 455.0 572.0 491.7 572.0 520.0 C572.0 548.3 577.0 570.0 575.0 600.0 C573.0 630.0 565.0 666.7 560.0 700.0 C555.0 733.3 551.7 766.7 545.0 800.0 C538.3 833.3 527.5 870.0 520.0 900.0 C512.5 930.0 501.7 961.7 500.0 980.0 C498.3 998.3 505.8 996.7 510.0 1010.0 C514.2 1023.3 522.0 1040.0 525.0 1060.0 C528.0 1080.0 528.8 1106.7 528.0 1130.0 C527.2 1153.3 524.7 1175.0 520.0 1200.0 C515.3 1225.0 509.2 1255.0 500.0 1280.0 C490.8 1305.0 480.0 1329.2 465.0 1350.0 C450.0 1370.8 430.8 1391.7 410.0 1405.0 C389.2 1418.3 362.5 1428.3 340.0 1430.0 C317.5 1431.7 295.8 1426.7 275.0 1415.0 C254.2 1403.3 231.7 1382.5 215.0 1360.0 C198.3 1337.5 185.0 1310.0 175.0 1280.0 C165.0 1250.0 161.7 1213.3 155.0 1180.0 C148.3 1146.7 140.8 1116.7 135.0 1080.0 C129.2 1043.3 125.0 1003.3 120.0 960.0 C115.0 916.7 109.2 863.3 105.0 820.0 C100.8 776.7 98.3 740.0 95.0 700.0 C91.7 660.0 87.5 620.0 85.0 580.0 C82.5 540.0 80.0 493.3 80.0 460.0 C80.0 426.7 84.2 406.7 85.0 380.0 C85.8 353.3 85.0 326.7 85.0 300.0 C85.0 273.3 83.3 243.3 85.0 220.0 C86.7 196.7 89.2 177.5 95.0 160.0 C100.8 142.5 110.8 126.3 120.0 115.0 C129.2 103.7 140.8 96.5 150.0 92.0 C159.2 87.5 164.2 87.5 175.0 88.0Z" fill="#a4a4a4"/>
<ellipse cx="330" cy="560" rx="150" ry="300" fill="#b3b3b3" filter="url(#b40)"/>
<ellipse cx="330" cy="220" rx="190" ry="90" fill="#adadad" filter="url(#b22)"/>
<ellipse cx="350" cy="1152" rx="436" ry="552" fill="url(#ankr2)"/>
<ellipse cx="350" cy="1152" rx="326" ry="397" fill="url(#ankr)"/>
<rect x="0" y="1192" width="800" height="500" fill="#474747" filter="url(#b22)"/>
<path d="M245 130 Q250 260 240 400 M350 165 Q330 290 320 430 M430 220 Q400 330 390 450 M500 310 Q470 400 455 480 M215 290 Q225 300 235 290" stroke="#8a8a8a" stroke-width="10" filter="url(#b6)" opacity=".55"/>
<path d="M175.0 88.0 C185.8 88.5 203.3 90.5 215.0 95.0 C226.7 99.5 230.8 112.5 245.0 115.0 C259.2 117.5 285.0 109.2 300.0 110.0 C315.0 110.8 325.8 113.3 335.0 120.0 C344.2 126.7 345.0 143.3 355.0 150.0 C365.0 156.7 383.3 154.2 395.0 160.0 C406.7 165.8 418.3 175.8 425.0 185.0 C431.7 194.2 427.5 206.7 435.0 215.0 C442.5 223.3 460.0 225.8 470.0 235.0 C480.0 244.2 489.2 257.5 495.0 270.0 C500.8 282.5 497.5 300.0 505.0 310.0 C512.5 320.0 530.0 320.0 540.0 330.0 C550.0 340.0 559.2 353.3 565.0 370.0 C570.8 386.7 573.8 405.0 575.0 430.0 C576.2 455.0 572.0 491.7 572.0 520.0 C572.0 548.3 577.0 570.0 575.0 600.0 C573.0 630.0 565.0 666.7 560.0 700.0 C555.0 733.3 551.7 766.7 545.0 800.0 C538.3 833.3 527.5 870.0 520.0 900.0 C512.5 930.0 501.7 961.7 500.0 980.0 C498.3 998.3 505.8 996.7 510.0 1010.0 C514.2 1023.3 522.0 1040.0 525.0 1060.0 C528.0 1080.0 528.8 1106.7 528.0 1130.0 C527.2 1153.3 524.7 1175.0 520.0 1200.0 C515.3 1225.0 509.2 1255.0 500.0 1280.0 C490.8 1305.0 480.0 1329.2 465.0 1350.0 C450.0 1370.8 430.8 1391.7 410.0 1405.0 C389.2 1418.3 362.5 1428.3 340.0 1430.0 C317.5 1431.7 295.8 1426.7 275.0 1415.0 C254.2 1403.3 231.7 1382.5 215.0 1360.0 C198.3 1337.5 185.0 1310.0 175.0 1280.0 C165.0 1250.0 161.7 1213.3 155.0 1180.0 C148.3 1146.7 140.8 1116.7 135.0 1080.0 C129.2 1043.3 125.0 1003.3 120.0 960.0 C115.0 916.7 109.2 863.3 105.0 820.0 C100.8 776.7 98.3 740.0 95.0 700.0 C91.7 660.0 87.5 620.0 85.0 580.0 C82.5 540.0 80.0 493.3 80.0 460.0 C80.0 426.7 84.2 406.7 85.0 380.0 C85.8 353.3 85.0 326.7 85.0 300.0 C85.0 273.3 83.3 243.3 85.0 220.0 C86.7 196.7 89.2 177.5 95.0 160.0 C100.8 142.5 110.8 126.3 120.0 115.0 C129.2 103.7 140.8 96.5 150.0 92.0 C159.2 87.5 164.2 87.5 175.0 88.0Z" stroke="#3a3a3a" stroke-width="40" filter="url(#b12)" opacity=".8"/>
</g>
<path d="M175.0 88.0 C185.8 88.5 203.3 90.5 215.0 95.0 C226.7 99.5 230.8 112.5 245.0 115.0 C259.2 117.5 285.0 109.2 300.0 110.0 C315.0 110.8 325.8 113.3 335.0 120.0 C344.2 126.7 345.0 143.3 355.0 150.0 C365.0 156.7 383.3 154.2 395.0 160.0 C406.7 165.8 418.3 175.8 425.0 185.0 C431.7 194.2 427.5 206.7 435.0 215.0 C442.5 223.3 460.0 225.8 470.0 235.0 C480.0 244.2 489.2 257.5 495.0 270.0 C500.8 282.5 497.5 300.0 505.0 310.0 C512.5 320.0 530.0 320.0 540.0 330.0 C550.0 340.0 559.2 353.3 565.0 370.0 C570.8 386.7 573.8 405.0 575.0 430.0 C576.2 455.0 572.0 491.7 572.0 520.0 C572.0 548.3 577.0 570.0 575.0 600.0 C573.0 630.0 565.0 666.7 560.0 700.0 C555.0 733.3 551.7 766.7 545.0 800.0 C538.3 833.3 527.5 870.0 520.0 900.0 C512.5 930.0 501.7 961.7 500.0 980.0 C498.3 998.3 505.8 996.7 510.0 1010.0 C514.2 1023.3 522.0 1040.0 525.0 1060.0 C528.0 1080.0 528.8 1106.7 528.0 1130.0 C527.2 1153.3 524.7 1175.0 520.0 1200.0 C515.3 1225.0 509.2 1255.0 500.0 1280.0 C490.8 1305.0 480.0 1329.2 465.0 1350.0 C450.0 1370.8 430.8 1391.7 410.0 1405.0 C389.2 1418.3 362.5 1428.3 340.0 1430.0 C317.5 1431.7 295.8 1426.7 275.0 1415.0 C254.2 1403.3 231.7 1382.5 215.0 1360.0 C198.3 1337.5 185.0 1310.0 175.0 1280.0 C165.0 1250.0 161.7 1213.3 155.0 1180.0 C148.3 1146.7 140.8 1116.7 135.0 1080.0 C129.2 1043.3 125.0 1003.3 120.0 960.0 C115.0 916.7 109.2 863.3 105.0 820.0 C100.8 776.7 98.3 740.0 95.0 700.0 C91.7 660.0 87.5 620.0 85.0 580.0 C82.5 540.0 80.0 493.3 80.0 460.0 C80.0 426.7 84.2 406.7 85.0 380.0 C85.8 353.3 85.0 326.7 85.0 300.0 C85.0 273.3 83.3 243.3 85.0 220.0 C86.7 196.7 89.2 177.5 95.0 160.0 C100.8 142.5 110.8 126.3 120.0 115.0 C129.2 103.7 140.8 96.5 150.0 92.0 C159.2 87.5 164.2 87.5 175.0 88.0Z" stroke="#5a5a5a" stroke-width="6" opacity=".75"/>
<g clip-path="url(#frd)"><ellipse cx="350" cy="1152" rx="176" ry="222" fill="#b8b8b8"/></g>
</g>
<g transform="translate(1440 1180) scale(0.234375)">
<clipPath id="sdc"><path d="M675 120 H945  C945.5 141.7 946.3 211.7 948.0 250.0 C949.7 288.3 952.2 316.7 955.0 350.0 C957.8 383.3 960.8 420.0 965.0 450.0 C969.2 480.0 975.0 508.3 980.0 530.0 C985.0 551.7 991.7 565.0 995.0 580.0 C998.3 595.0 1000.8 608.3 1000.0 620.0 C999.2 631.7 996.7 642.3 990.0 650.0 C983.3 657.7 965.0 663.3 960.0 666.0 L200 668  C191.7 667.5 162.0 668.8 150.0 665.0 C138.0 661.2 132.3 652.5 128.0 645.0 C123.7 637.5 122.8 626.8 124.0 620.0 C125.2 613.2 129.0 607.3 135.0 604.0 C141.0 600.7 150.8 599.7 160.0 600.0 C169.2 600.3 175.0 608.5 190.0 606.0 C205.0 603.5 226.7 595.2 250.0 585.0 C273.3 574.8 301.7 558.8 330.0 545.0 C358.3 531.2 388.3 516.2 420.0 502.0 C451.7 487.8 490.0 472.8 520.0 460.0 C550.0 447.2 580.0 436.7 600.0 425.0 C620.0 413.3 629.2 404.2 640.0 390.0 C650.8 375.8 659.2 363.3 665.0 340.0 C670.8 316.7 673.3 286.7 675.0 250.0 C676.7 213.3 675.0 141.7 675.0 120.0Z"/></clipPath>
<g id="sideL"><g clip-path="url(#sdc)">
<path d="M675 120 H945  C945.5 141.7 946.3 211.7 948.0 250.0 C949.7 288.3 952.2 316.7 955.0 350.0 C957.8 383.3 960.8 420.0 965.0 450.0 C969.2 480.0 975.0 508.3 980.0 530.0 C985.0 551.7 991.7 565.0 995.0 580.0 C998.3 595.0 1000.8 608.3 1000.0 620.0 C999.2 631.7 996.7 642.3 990.0 650.0 C983.3 657.7 965.0 663.3 960.0 666.0 L200 668  C191.7 667.5 162.0 668.8 150.0 665.0 C138.0 661.2 132.3 652.5 128.0 645.0 C123.7 637.5 122.8 626.8 124.0 620.0 C125.2 613.2 129.0 607.3 135.0 604.0 C141.0 600.7 150.8 599.7 160.0 600.0 C169.2 600.3 175.0 608.5 190.0 606.0 C205.0 603.5 226.7 595.2 250.0 585.0 C273.3 574.8 301.7 558.8 330.0 545.0 C358.3 531.2 388.3 516.2 420.0 502.0 C451.7 487.8 490.0 472.8 520.0 460.0 C550.0 447.2 580.0 436.7 600.0 425.0 C620.0 413.3 629.2 404.2 640.0 390.0 C650.8 375.8 659.2 363.3 665.0 340.0 C670.8 316.7 673.3 286.7 675.0 250.0 C676.7 213.3 675.0 141.7 675.0 120.0Z" fill="#a8a8a8"/>
<ellipse cx="800" cy="330" rx="110" ry="260" fill="#b5b5b5" filter="url(#b22)"/>
<ellipse cx="600" cy="560" rx="330" ry="60" fill="#b3b3b3" filter="url(#b22)"/>
<path d="M400 700 Q600 590 830 700Z" fill="#333" filter="url(#b12)"/>
<ellipse cx="935" cy="560" rx="55" ry="120" fill="#8a8a8a" filter="url(#b22)" opacity=".45"/>
<path d="M852 310 Q836 370 862 440" stroke="#8c8c8c" stroke-width="26" filter="url(#b12)" opacity=".75"/>
<path d="M330 545 Q430 500 540 470 L500 520 Q420 540 350 560Z" fill="#7a7a7a" filter="url(#b6)" opacity=".8"/>
<path d="M675 120 H945  C945.5 141.7 946.3 211.7 948.0 250.0 C949.7 288.3 952.2 316.7 955.0 350.0 C957.8 383.3 960.8 420.0 965.0 450.0 C969.2 480.0 975.0 508.3 980.0 530.0 C985.0 551.7 991.7 565.0 995.0 580.0 C998.3 595.0 1000.8 608.3 1000.0 620.0 C999.2 631.7 996.7 642.3 990.0 650.0 C983.3 657.7 965.0 663.3 960.0 666.0 L200 668  C191.7 667.5 162.0 668.8 150.0 665.0 C138.0 661.2 132.3 652.5 128.0 645.0 C123.7 637.5 122.8 626.8 124.0 620.0 C125.2 613.2 129.0 607.3 135.0 604.0 C141.0 600.7 150.8 599.7 160.0 600.0 C169.2 600.3 175.0 608.5 190.0 606.0 C205.0 603.5 226.7 595.2 250.0 585.0 C273.3 574.8 301.7 558.8 330.0 545.0 C358.3 531.2 388.3 516.2 420.0 502.0 C451.7 487.8 490.0 472.8 520.0 460.0 C550.0 447.2 580.0 436.7 600.0 425.0 C620.0 413.3 629.2 404.2 640.0 390.0 C650.8 375.8 659.2 363.3 665.0 340.0 C670.8 316.7 673.3 286.7 675.0 250.0 C676.7 213.3 675.0 141.7 675.0 120.0Z" stroke="#404040" stroke-width="20" filter="url(#b6)" opacity=".75"/>
</g><path d="M675 120 H945  C945.5 141.7 946.3 211.7 948.0 250.0 C949.7 288.3 952.2 316.7 955.0 350.0 C957.8 383.3 960.8 420.0 965.0 450.0 C969.2 480.0 975.0 508.3 980.0 530.0 C985.0 551.7 991.7 565.0 995.0 580.0 C998.3 595.0 1000.8 608.3 1000.0 620.0 C999.2 631.7 996.7 642.3 990.0 650.0 C983.3 657.7 965.0 663.3 960.0 666.0 L200 668  C191.7 667.5 162.0 668.8 150.0 665.0 C138.0 661.2 132.3 652.5 128.0 645.0 C123.7 637.5 122.8 626.8 124.0 620.0 C125.2 613.2 129.0 607.3 135.0 604.0 C141.0 600.7 150.8 599.7 160.0 600.0 C169.2 600.3 175.0 608.5 190.0 606.0 C205.0 603.5 226.7 595.2 250.0 585.0 C273.3 574.8 301.7 558.8 330.0 545.0 C358.3 531.2 388.3 516.2 420.0 502.0 C451.7 487.8 490.0 472.8 520.0 460.0 C550.0 447.2 580.0 436.7 600.0 425.0 C620.0 413.3 629.2 404.2 640.0 390.0 C650.8 375.8 659.2 363.3 665.0 340.0 C670.8 316.7 673.3 286.7 675.0 250.0 C676.7 213.3 675.0 141.7 675.0 120.0Z" stroke="#707070" stroke-width="2" opacity=".4"/></g>
<use href="#sideL" transform="translate(2048 0) scale(-1 1)"/>
</g>
<g stroke="#d92e80" stroke-width="4.3"><circle cx="643" cy="1417" r="10.9"/><path d="M651.4 1425.4 L662.8 1436.6" stroke-width="4.6"/></g>
<g stroke="#d92e80" stroke-width="4.3"><circle cx="1299" cy="1417" r="10.9"/><path d="M1307.4 1425.4 L1318.8 1436.6" stroke-width="4.6"/></g>
<g stroke="#d92e80" stroke-width="4.3"><circle cx="1955" cy="1417" r="10.9"/><path d="M1963.4 1425.4 L1974.8 1436.6" stroke-width="4.6"/></g>
</svg>
<!--/CARDS-->

</body>
</html>
